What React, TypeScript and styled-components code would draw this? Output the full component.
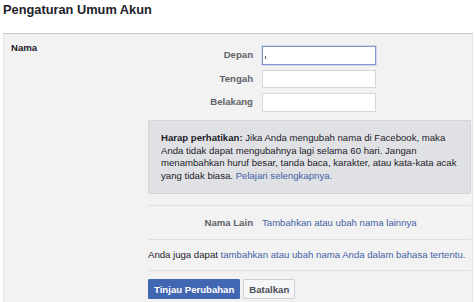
import styled, { createGlobalStyle } from 'styled-components'

const Global = createGlobalStyle`
body{
  margin: 0;
  background: #ffffff;
  font-family: "Liberation Sans", Arial, sans-serif;
  color: #1d2129;
}
`

const App = () => {
    return (
        <Page>
            <Global />
            <Title>Pengaturan Umum Akun</Title>
            <Panel>
                <Side>Nama</Side>
                <Body>
                    <Fields>
                        <Label>Depan</Label>
                        <Input focused>
                            <Caret />
                        </Input>
                        <Label>Tengah</Label>
                        <Input />
                        <Label>Belakang</Label>
                        <Input />
                    </Fields>

                    <Notice>
                        <b>Harap perhatikan:</b> Jika Anda mengubah nama di Facebook, maka
                        Anda tidak dapat mengubahnya lagi selama 60 hari. Jangan
                        menambahkan huruf besar, tanda baca, karakter, atau kata-kata acak
                        yang tidak biasa. <Link>Pelajari selengkapnya.</Link>
                    </Notice>

                    <OtherRow>
                        <Label>Nama Lain</Label>
                        <Link>Tambahkan atau ubah nama lainnya</Link>
                    </OtherRow>

                    <LangRow>
                        Anda juga dapat{' '}
                        <Link>tambahkan atau ubah nama Anda dalam bahasa tertentu.</Link>
                    </LangRow>

                    <Actions>
                        <Button primary>Tinjau Perubahan</Button>
                        <Button>Batalkan</Button>
                    </Actions>
                </Body>
            </Panel>
        </Page>
    )
}

export default App


const Page = styled.div`
width: 474px;
height: 302px;
overflow: hidden;
`

const Title = styled.h2`
margin: 0;
padding: 2px 0 0 3px;
height: 31px;
font-size: 12.8px;
line-height: 16px;
font-weight: bold;
color: #1d2129;
`

const Panel = styled.div`
margin: 0 1px 0 3px;
display: grid;
grid-template-columns: 144px 1fr;
background-color: #f2f2f2;
border-top: 1px solid #c6c7ca;
border-left: 1px solid #e4e4e4;
border-right: 1px solid #e4e4e4;
padding-bottom: 20px;
`

const Side = styled.div`
padding: 8px 0 0 7px;
font-size: 9.6px;
line-height: 12.8px;
font-weight: bold;
color: #1d2129;
`

const Body = styled.div`
display: flex;
flex-direction: column;
padding: 12px 1px 0 0;
font-size: 9.6px;
line-height: 12.4px;
`

const Fields = styled.div`
display: grid;
grid-template-columns: 105px 114px;
column-gap: 9px;
row-gap: 5px;
align-items: center;
`

const Label = styled.span`
text-align: right;
font-weight: bold;
color: #5f6368;
font-size: 9.6px;
`

const Input = styled.div<{ focused?: boolean }>`
position: relative;
height: 18.5px;
box-sizing: border-box;
background: #ffffff;
border: 1px solid ${(p) => (p.focused ? '#7f98d0' : '#d6d8dc')};
box-shadow: ${(p) => (p.focused ? '0 0 0 0.5px #a9b9e0' : 'none')};
`

const Caret = styled.span`
position: absolute;
left: 2px;
top: 9px;
width: 1px;
height: 3px;
background: #555;
`

const Notice = styled.div`
margin-top: 8.5px;
padding: 11px 10px 11px 12px;
background-color: #e0e1e5;
border: 1px solid #d3d5d9;
border-radius: 1px;
color: #1d2129;
font-size: 9.6px;
line-height: 12.6px;

b{
  font-weight: bold;
}
`

const Link = styled.span`
color: #4463a4;
`

const OtherRow = styled.div`
margin-top: 11px;
border-top: 1px solid #dddfe2;
border-bottom: 1px solid #dddfe2;
height: 33px;
display: grid;
grid-template-columns: 105px auto;
column-gap: 9px;
align-items: center;
`

const LangRow = styled.div`
height: 30px;
line-height: 30px;
border-bottom: 1px solid #dddfe2;
color: #1d2129;
white-space: nowrap;
`

const Actions = styled.div`
display: flex;
gap: 3px;
padding-top: 8px;
`

const Button = styled.button<{ primary?: boolean }>`
height: 20px;
padding: 0 5px;
font-family: "Liberation Sans", Arial, sans-serif;
font-size: 9.6px;
font-weight: bold;
border-radius: 1px;
border: 1px solid ${(p) => (p.primary ? '#4267b2' : '#ccd0d5')};
background-color: ${(p) => (p.primary ? '#4267b2' : '#f5f6f7')};
color: ${(p) => (p.primary ? '#ffffff' : '#4b4f56')};
`
